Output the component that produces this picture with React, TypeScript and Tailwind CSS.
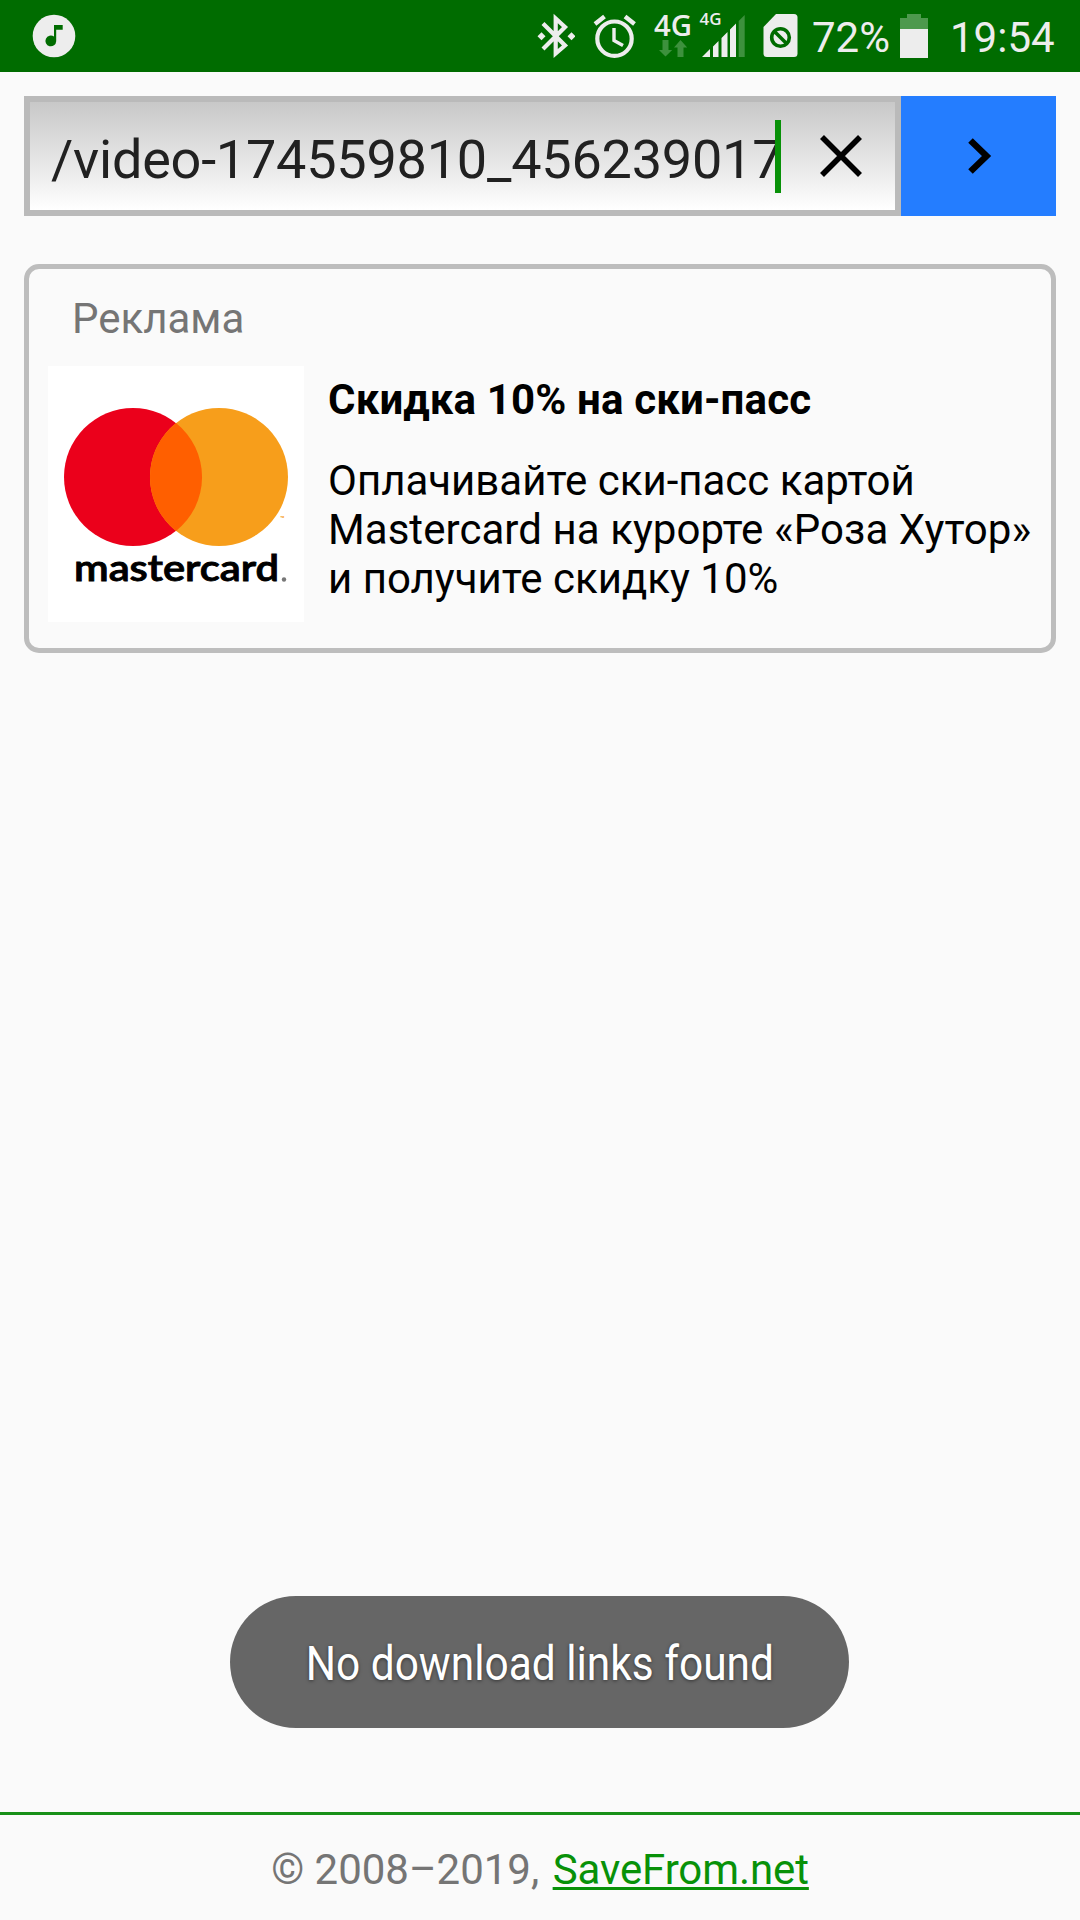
import type { ReactNode } from 'react';

interface IconProps {
  width: number;
  className?: string;
  children: ReactNode;
}

// every status bar icon is drawn on a canvas as tall as the bar
function StatusIcon({ width, className, children }: IconProps) {
  return (
    <svg width={width} height={72} viewBox={`0 0 ${width} 72`} className={`shrink-0 ${className ?? ''}`}>
      {children}
    </svg>
  );
}

function StatusBar() {
  return (
    <div className="flex h-[72px] shrink-0 bg-[#006c00] text-[#ededed]">
      <StatusIcon width={44} className="ml-8">
        <circle cx="22" cy="36" r="21.3" fill="#ededed" />
        <path
          d="M22 25h8.7v4.7h-6.5v11.500a5.400 5.400 0 1 1-2.200-4.600z"
          fill="#006c00"
        />
      </StatusIcon>

      <StatusIcon width={38} className="ml-[461px]">
        <path d="M6 23.5 28 45.5 18.7 53.500V18.500L28 27 6 49" fill="none" stroke="#ededed" strokeWidth="4.2" />
        <path d="M0.5 36.3l4-4 4 4-4 4zM30.5 36.3l4-4 4 4-4 4z" fill="#ededed" />
      </StatusIcon>

      <StatusIcon width={44} className="ml-[18px]">
        <g fill="none" stroke="#ededed">
          <circle cx="21.5" cy="38.7" r="17.2" strokeWidth="4.2" />
          <path d="M21 28v12.5l9 5" strokeWidth="3.4" />
          <path d="M2 24l9.500-7.500M41.500 24l-9.500-7.500" strokeWidth="4.4" />
        </g>
      </StatusIcon>

      <StatusIcon width={38} className="ml-[17px]">
        <text x="0" y="35.500" fontSize="28.500" fontWeight="600" textLength="38" lengthAdjust="spacingAndGlyphs" fill="#ededed" className="font-['Open_Sans',sans-serif]">
          4G
        </text>
        <path d="M8.500 40h6v10h3.700L11.500 56.500 5 50h3.500zM23.500 57h6V47.500h3.700L26.500 40 20 47.500h3.500z" fill="#3d913d" />
      </StatusIcon>

      <StatusIcon width={48} className="ml-[7px]">
        <text x="0.500" y="25" fontSize="17" fontWeight="600" textLength="22" lengthAdjust="spacingAndGlyphs" fill="#ededed" className="font-['Open_Sans',sans-serif]">
          4G
        </text>
        <path d="M3 57l8-8v8zM14 57V46.500l5.500-5.500v16zM22.500 57V38l6-6v25zM31 57V29.500l6-6V57z" fill="#ededed" />
        <path d="M39.700 57V21l6-6v42z" fill="#3d913d" />
      </StatusIcon>

      <StatusIcon width={35} className="ml-[16px]">
        <path d="M13 14h18q3.500 0 3.500 3.500v36q0 3.500-3.500 3.500H4q-3.500 0-3.500-3.500V27z" fill="#ededed" />
        <g fill="none" stroke="#006c00" strokeWidth="3.6">
          <circle cx="17.5" cy="37.500" r="8.800" />
          <path d="M11.500 31.500l12 12" />
        </g>
      </StatusIcon>

      <span className="ml-[14px] w-[80px] text-[42px] leading-[75px] whitespace-nowrap">72%</span>

      <StatusIcon width={28} className="ml-[8px]">
        <path d="M0 29V18h7v-4h14v4h7v11z" fill="#4d994d" />
        <path d="M0 29h28v29H0z" fill="#ededed" />
      </StatusIcon>

      <span className="ml-[22px] text-[42px] leading-[75px] whitespace-nowrap">19:54</span>
    </div>
  );
}

function SearchBar() {
  return (
    <div className="mx-6 mt-6 flex h-[120px] shrink-0">
      <div className="relative flex w-[877px] border-[6px] border-[#bababa] bg-linear-to-b from-[#c8c8c8] to-white">
        <span className="ml-[21px] text-[54px] leading-[116px] tracking-[-0.22px] whitespace-nowrap text-[#212121]">
          /video-174559810_456239017
        </span>
        <span className="absolute top-[18px] left-[745px] h-[73px] w-[6px] bg-[#089108]" />
        <svg width="42" height="42" viewBox="0 0 42 42" className="absolute top-[33px] left-[790px]">
          <path d="M2 2l38 38M40 2L2 40" stroke="#000" strokeWidth="5.600" />
        </svg>
      </div>
      <button className="flex w-[155px] items-center bg-[#247dff] pl-[67px]">
        <svg width="24" height="36" viewBox="0 0 24 36">
          <path d="M2.500 2.500L18.500 18l-16 15.500" fill="none" stroke="#000" strokeWidth="6.500" />
        </svg>
      </button>
    </div>
  );
}

function MastercardLogo() {
  return (
    <svg width="256" height="256" viewBox="0 0 256 256" className="shrink-0 bg-white">
      <circle cx="85" cy="111" r="69" fill="#eb001b" />
      <circle cx="171" cy="111" r="69" fill="#f79e1b" />
      <path d="M128 57a69 69 0 0 1 0 108a69 69 0 0 1 0-108z" fill="#ff5f00" />
      <text x="232" y="155" fontSize="7" fontWeight="700" fill="#f79e1b" className="font-['Roboto',sans-serif]">™</text>
      <text x="26" y="215" fontSize="36" fontWeight="600" stroke="#000" strokeWidth="0.9" textLength="205" lengthAdjust="spacingAndGlyphs" className="font-['Lato',sans-serif]">
        mastercard
      </text>
      <circle cx="236" cy="213.500" r="2.200" fill="#777" />
    </svg>
  );
}

function AdCard() {
  return (
    <div className="mx-6 mt-12 h-[389px] shrink-0 rounded-[15px] border-[5px] border-[#bdbdbd]">
      <div className="mt-[25px] ml-[43px] text-[42px] leading-[50px] text-[#757575]">Реклама</div>
      <div className="mt-[22px] ml-[19px] flex">
        <MastercardLogo />
        <div className="ml-6 text-[42px] leading-[49px] whitespace-nowrap text-black">
          <div className="mt-[9px] font-bold tracking-[0.15px]">Скидка 10% на ски-пасс</div>
          <div className="mt-[32px]">
            Оплачивайте ски-пасс картой
            <br />
            <span className="tracking-[0.06px]">Mastercard на курорте «Роза Хутор»</span>
            <br />и получите скидку 10%
          </div>
        </div>
      </div>
    </div>
  );
}

export default function App() {
  return (
    <div className="flex h-[1920px] w-[1080px] flex-col overflow-hidden bg-[#fafafa] font-['Roboto',sans-serif]">
      <StatusBar />
      <SearchBar />
      <AdCard />
      <div className="mt-auto mb-[84px] ml-[230px] flex h-[132px] w-[619px] shrink-0 items-center justify-center rounded-full bg-[#666]">
        <span className="scale-x-[0.884] pt-[3px] text-[48px] leading-none whitespace-nowrap text-white [text-shadow:0_1px_4px_rgba(0,0,0,0.5)]">
          No download links found
        </span>
      </div>
      <footer className="flex h-[108px] shrink-0 justify-center border-t-[3px] border-[#189018] text-[42px] leading-[109px] text-[#757575]">
        <span className="mr-[3px] whitespace-pre">© 2008–2019, </span>
        <a className="tracking-[-0.1px] text-[#089108] underline decoration-[3px] underline-offset-[3px]">SaveFrom.net</a>
      </footer>
    </div>
  );
}
